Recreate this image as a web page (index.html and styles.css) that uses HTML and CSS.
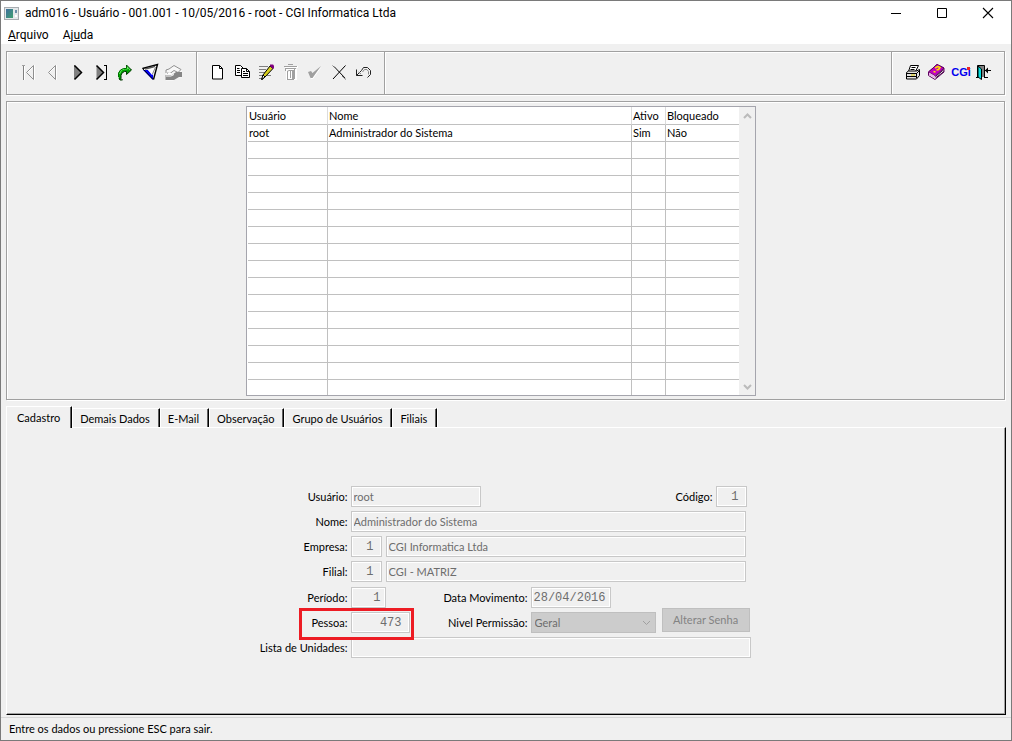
FILE: index.html
```html
<!DOCTYPE html>
<html lang="pt-BR">
<head>
<meta charset="utf-8">
<title>adm016 - Usuário</title>
<link rel="stylesheet" href="styles.css">
</head>
<body>
<div class="window">
  <header class="titlebar">
    <svg class="app-icon" viewBox="0 0 15 13" width="15" height="13" aria-hidden="true">
      <defs><linearGradient id="app" x1="0" y1="0" x2="1" y2="1"><stop offset="0" stop-color="#3f6f9f"/><stop offset="1" stop-color="#3fa070"/></linearGradient></defs>
      <rect x=".5" y=".5" width="14" height="12" fill="#e4e8ea" stroke="#a8acb0"/>
      <rect x="2" y="2" width="7" height="9" fill="url(#app)"/>
      <path d="M11 3h2v3h-2z" fill="#6a8fa8"/><path d="M11 8h2v2h-2z" fill="#fff"/>
    </svg>
    <h1 class="title">adm016 - Usuário - 001.001 - 10/05/2016 - root - CGI Informatica Ltda</h1>
    <div class="window-controls">
      <button type="button" aria-label="Minimizar"><svg viewBox="0 0 12 12" width="12" height="12"><path d="M1 6.500h10" stroke="#000"/></svg></button>
      <button type="button" aria-label="Maximizar"><svg viewBox="0 0 12 12" width="12" height="12"><path d="M1.500 1.500h9v9h-9z" fill="none" stroke="#000"/></svg></button>
      <button type="button" aria-label="Fechar"><svg viewBox="0 0 12 12" width="12" height="12"><path d="M1 1l10 10M11 1L1 11" stroke="#000" stroke-width="1.1"/></svg></button>
    </div>
  </header>
  <nav class="menubar">
    <button type="button"><u>A</u>rquivo</button>
    <button type="button">Aj<u>u</u>da</button>
  </nav>

  <div class="toolbar" role="toolbar">
    <div class="tool-group">
      <button type="button" disabled aria-label="Primeiro"><svg viewBox="0 0 24 24"><g fill="none"><path d="M8.500 5v15M18.500 5v15" stroke="#fff"/><path d="M7.500 5v15" stroke="#808080"/><path d="M6 5.500h3" stroke="#a0a0a0"/><path d="M17.500 5.500l-7 7 7 7z" stroke="#909090"/><path d="M16.500 7.500l-5 5" stroke="#fff"/></g></svg></button>
      <button type="button" disabled aria-label="Anterior"><svg viewBox="0 0 24 24"><g fill="none"><path d="M16.500 5v15" stroke="#fff"/><path d="M15.500 5.500l-7 7 7 7z" stroke="#909090"/><path d="M14.500 7.500l-5 5" stroke="#fff"/></g></svg></button>
      <button type="button" aria-label="Próximo"><svg viewBox="0 0 24 24"><path d="M10.500 6v13l6.500-6.500z" fill="#808080"/><path d="M10.500 5v14" stroke="#808080"/><path d="M10.500 5.500l7 7-7 7" fill="none" stroke="#000" stroke-width="1.500"/></svg></button>
      <button type="button" aria-label="Último"><svg viewBox="0 0 24 24"><path d="M8.500 6v13l6.500-6.500z" fill="#808080"/><path d="M8.500 5.500l7 7-7 7" fill="none" stroke="#000" stroke-width="1.500"/><path d="M16 5.500h2M16 19.500h3" stroke="#000" fill="none"/><path d="M18.500 5v15" stroke="#000"/></svg></button>
      <button type="button" aria-label="Ir para"><svg viewBox="0 0 24 24"><path d="M9 20H7.500L6.500 17v-4l2-3 3-1.500h3V5.500l5 4.500-5 4.500V11.500h-2l-2.500 1.500-1 2.500z" fill="#00a000"/><path d="M7.500 14l2-4 3-1h3V7l2.500 3" stroke="#60f060" fill="none"/><path d="M6.500 17v-4l2-3 3-1.500h3V5" fill="none" stroke="#007000"/><path d="M14.500 5l5 5-5 4.500v-3h-2l-2.500 1.500-1 2.500v3l1.500 1.500h-2.500l-1-2" fill="none" stroke="#003800"/></svg></button>
      <button type="button" aria-label="Filtro"><svg viewBox="0 0 24 24"><path d="M6.500 9l15-4.500-4 15.500z" fill="#f4f4f4"/><path d="M7 10h5l5 5v5z" fill="#0000f0"/><path d="M6.500 8.500l15-4-4 15" fill="none" stroke="#000" stroke-width="1.400"/><path d="M6.500 8.500l10.500 11" stroke="#000"/><path d="M9 9l10-2.500" stroke="#555" stroke-width="1.500"/><path d="M12 10l4 5 3.500-8z" fill="#fff"/><path d="M19.500 7l-3 7" stroke="#888"/></svg></button>
      <button type="button" disabled aria-label="Consultar"><svg viewBox="0 0 24 24"><path d="M6 11l8-6 8 4.500v8l-6 1-3 2.500H6z" fill="#f7f7f7"/><path d="M6 13V10l3-1 5-3.500 7 4-3 3-4-2-4 3-3-.5" fill="none" stroke="#909090"/><path d="M5.500 15h6.500l4-3h6v5h-3l-5 3h-8.500z" fill="#858585"/><path d="M8 13.500h3M6 16h5l3-1.500" fill="none" stroke="#fff"/></svg></button>
    </div>
    <div class="tool-group">
      <button type="button" aria-label="Novo"><svg viewBox="0 0 24 24"><path d="M7.500 5.500h7l3 3v10.500h-10z" fill="#fff" stroke="#000"/><path d="M14.500 5.500v3h3" fill="none" stroke="#000"/></svg></button>
      <button type="button" aria-label="Copiar"><svg viewBox="0 0 24 24"><g fill="#fff" stroke="#000"><path d="M6.500 5.500h5l3 3v7h-8z"/><path d="M12.500 8.500h5l3 3v6h-8z"/><path d="M17.500 8.500v3h3M8 8.500h2.500M8 10.500h3M8 12.500h3M14 11.500h2M14 13.500h5M14 15.500h5" fill="none"/></g></svg></button>
      <button type="button" aria-label="Alterar"><svg viewBox="0 0 24 24"><path d="M6 6.500h9M6 9.500h7M6 12.500h6M6 15.500h4M14 15.500h4M6 18.500h3" stroke="#808080"/><path d="M17 6l3 2.500-8 8.500-3 2.500L10 15z" fill="#d8d020" stroke="#000"/><path d="M10 15l2 2-3.500 2.500z" fill="#fff" stroke="#000"/><path d="M17 4.500h3l1 1V8l-1 1-3-3z" fill="#800080"/></svg></button>
      <button type="button" disabled aria-label="Excluir"><svg viewBox="0 0 24 24"><path d="M9 9h11v11H9zM8 6h13v2H8z" fill="#fff"/><path d="M11 4.500h5M7 6.500h13M8 8.500h11" stroke="#a0a0a0"/><path d="M8.500 8v3M10.500 11v8M10 19.500h7M17.500 8v11M13.500 10v8M11.500 10l-1 2M12 10.500h3" stroke="#a0a0a0"/><path d="M15 10h3v9h-3z" fill="#a0a0a0"/></svg></button>
      <button type="button" disabled aria-label="Confirmar"><svg viewBox="0 0 24 24"><path d="M8 13l3-1 1.500 2 8-7-8.500 12h-2z" fill="#fff"/><path d="M7 12l3-1 1.500 2L20 6l-8.500 12h-2z" fill="#a0a0a0"/></svg></button>
      <button type="button" aria-label="Cancelar"><svg viewBox="0 0 24 24"><path d="M9 6.500l11 11.500M20.500 5.500L8 19" stroke="#000"/><path d="M7.500 5.500l4 4M17 16l4 3.500" stroke="#777"/></svg></button>
      <button type="button" aria-label="Desfazer"><svg viewBox="0 0 24 24"><path d="M7.500 9.500v6h6M7.500 15.500l5-5 2-3h4l3 3v4l-3 3" fill="none" stroke="#222"/><path d="M9.500 12l2.500 2M13.500 12l2-2.500h2.500l1.500 2v3" fill="none" stroke="#888"/></svg></button>
    </div>
    <div class="tool-spacer"></div>
    <div class="tool-group">
      <button type="button" aria-label="Imprimir"><svg viewBox="0 0 24 24"><path d="M9.500 5.500h8l-3 6h-7z" fill="#fff" stroke="#000"/><path d="M10.500 7.500h4M9.500 9.500h4" stroke="#000"/><path d="M5.500 12.500l2-1.500h8l3-1.500v6l-3 3.500h-10z" fill="#e4e4e4" stroke="#000"/><path d="M6 13.500h9.500l3-3M15.500 13v5M6 16.500h9" fill="none" stroke="#000"/><path d="M10 15h4" stroke="#e0d000"/></svg></button>
      <button type="button" aria-label="Ajuda"><svg viewBox="0 0 24 24"><path d="M3.500 12l8.500-7.500 7 3.500v4L10 19.500l-6.500-4z" fill="#fff" stroke="#600060"/><path d="M3.500 12L12 4.500l7 3.500-8.500 8z" fill="#c000c0" stroke="#600060"/><path d="M4 12.500v2.500l6 3.500v-2.500z" fill="#e8b0e8"/><path d="M10.500 18l8.500-6.500M10.500 16.500L19 9.500" stroke="#400040"/><path d="M10 8l3-1.500 2 1-1.500 2-2 .5M8.500 11.500l2 .5" fill="none" stroke="#ffe000" stroke-width="1.600"/></svg></button>
      <button type="button" class="cgi">CGi</button>
      <button type="button" aria-label="Sair"><svg viewBox="0 0 24 24"><path d="M3 17.500h3M11 17.500h4" stroke="#000"/><path d="M4.500 17V5.500h7V17" fill="#808080" stroke="#000"/><path d="M5 6l3.500 3v10.500L5 17z" fill="#00e0e0" stroke="#000"/><path d="M12 10.500h6" stroke="#000"/><path d="M12 10.500l3-3v6z" fill="#000"/></svg></button>
    </div>
  </div>

  <main class="main">
    <section class="grid-panel">
      <div class="grid-box">
        <table class="users">
          <colgroup><col class="c-user"><col><col class="c-active"><col class="c-blocked"></colgroup>
          <thead><tr><th>Usuário</th><th>Nome</th><th>Ativo</th><th>Bloqueado</th></tr></thead>
          <tbody>
            <tr><td>root</td><td>Administrador do Sistema</td><td>Sim</td><td>Não</td></tr>
            <tr><td></td><td></td><td></td><td></td></tr>
            <tr><td></td><td></td><td></td><td></td></tr>
            <tr><td></td><td></td><td></td><td></td></tr>
            <tr><td></td><td></td><td></td><td></td></tr>
            <tr><td></td><td></td><td></td><td></td></tr>
            <tr><td></td><td></td><td></td><td></td></tr>
            <tr><td></td><td></td><td></td><td></td></tr>
            <tr><td></td><td></td><td></td><td></td></tr>
            <tr><td></td><td></td><td></td><td></td></tr>
            <tr><td></td><td></td><td></td><td></td></tr>
            <tr><td></td><td></td><td></td><td></td></tr>
            <tr><td></td><td></td><td></td><td></td></tr>
            <tr><td></td><td></td><td></td><td></td></tr>
            <tr><td></td><td></td><td></td><td></td></tr>
            <tr><td></td><td></td><td></td><td></td></tr>
          </tbody>
        </table>
        <div class="scrollbar">
          <button type="button" aria-label="Rolar para cima"><svg viewBox="0 0 9 6" width="9" height="6"><path d="M1 5l3.500-3.500L8 5" fill="none" stroke="#bbb" stroke-width="2"/></svg></button>
          <button type="button" aria-label="Rolar para baixo"><svg viewBox="0 0 9 6" width="9" height="6"><path d="M1 1l3.500 3.500L8 1" fill="none" stroke="#bbb" stroke-width="2"/></svg></button>
        </div>
      </div>
    </section>

    <div class="tabs" role="tablist">
      <button type="button" role="tab" aria-selected="true" class="tab active">Cadastro</button>
      <button type="button" role="tab" class="tab">Demais Dados</button>
      <button type="button" role="tab" class="tab">E-Mail</button>
      <button type="button" role="tab" class="tab">Observação</button>
      <button type="button" role="tab" class="tab">Grupo de Usuários</button>
      <button type="button" role="tab" class="tab">Filiais</button>
    </div>
    <section class="tab-panel" role="tabpanel">
      <form class="form">
        <div class="row">
          <label for="usuario">Usuário:</label>
          <input id="usuario" class="w-user" value="root" disabled>
          <label for="codigo" class="push">Código:</label>
          <input id="codigo" class="num w-code" value="1" disabled>
          <span class="edge"></span>
        </div>
        <div class="row">
          <label for="nome">Nome:</label>
          <input id="nome" class="w-name" value="Administrador do Sistema" disabled>
        </div>
        <div class="row">
          <label for="empresa">Empresa:</label>
          <input id="empresa" class="num w-code" value="1" disabled>
          <input class="w-desc" aria-label="Nome da empresa" value="CGI Informatica Ltda" disabled>
        </div>
        <div class="row">
          <label for="filial">Filial:</label>
          <input id="filial" class="num w-code" value="1" disabled>
          <input class="w-desc" aria-label="Nome da filial" value="CGI - MATRIZ" disabled>
        </div>
        <div class="row">
          <label for="periodo">Período:</label>
          <div class="cell"><input id="periodo" class="num w-period" value="1" disabled></div>
          <label for="data" class="second">Data Movimento:</label>
          <input id="data" class="num w-date" value="28/04/2016" disabled>
        </div>
        <div class="row highlighted">
          <label for="pessoa">Pessoa:</label>
          <div class="cell"><input id="pessoa" class="num w-person" value="473" disabled></div>
          <label for="nivel" class="second">Nivel Permissão:</label>
          <div class="select-wrap">
            <select id="nivel" disabled><option>Geral</option></select>
            <svg viewBox="0 0 9 6" width="9" height="6" aria-hidden="true"><path d="M1 1l3.500 3.500L8 1" fill="none" stroke="#a0a0a0"/></svg>
          </div>
          <button type="button" class="password" disabled>Alterar Senha</button>
        </div>
        <div class="row">
          <label for="lista">Lista de Unidades:</label>
          <input id="lista" class="w-list" value="" disabled>
        </div>
      </form>
    </section>
  </main>
  <footer class="status">Entre os dados ou pressione ESC para sair.</footer>
</div>
</body>
</html>
```
FILE: styles.css
```css
*, *::before, *::after { box-sizing: border-box; }
body { margin: 0; color: #000; background: #f0f0f0; font: 11px/16px Lato, "Liberation Sans", sans-serif; }
button, input, select { font: inherit; color: inherit; margin: 0; border-radius: 0; }
button { background: none; border: 0; padding: 0; }
svg { display: block; }

.window { min-height: 100vh; display: flex; flex-direction: column; border: 1px solid #7a7a7a; }

.titlebar { display: flex; align-items: center; height: 24px; padding-left: 3px; background: #fff; }
.title { flex: 1; margin: 0 0 0 6px; font: 12px/16px Roboto, "Noto Sans", sans-serif; white-space: nowrap; }
.window-controls { display: flex; }
.window-controls button { display: grid; place-items: center; width: 46px; height: 24px; }
.menubar { display: flex; gap: 14px; height: 19px; padding-left: 7px; background: #fff; font: 12px/20px Roboto, "Noto Sans", sans-serif; }

.toolbar { display: flex; margin: 7px 6px 6px 5px; border: 1px solid #a0a0a0; border-left: 0; box-shadow: inset 0 1px #fff, 1px 1px #fff; }
.tool-group { display: flex; padding: 8px 12px 10px 9px; border-left: 1px solid #a0a0a0; box-shadow: inset 1px 0 #fff; }
.tool-group + .tool-group { padding-left: 8px; padding-right: 11px; }
.tool-spacer { flex: 1; border-left: 1px solid #a0a0a0; box-shadow: inset 1px 0 #fff; }
.tool-spacer + .tool-group { padding-right: 7px; }
.tool-group button, .tool-group svg { width: 24px; height: 24px; }
.cgi { position: relative; color: #00e; font: bold 11px/24px "Liberation Sans", sans-serif; }
.cgi::after { content: ""; position: absolute; top: 7px; right: 3px; width: 3px; height: 3px; background: #e22; }

.main { flex: 1; display: flex; flex-direction: column; padding: 0 5px 0 5px; }
.grid-panel { display: flex; justify-content: center; padding: 4px 9px 3px 0; margin-right: 1px; border: 1px solid #a0a0a0; box-shadow: inset 1px 1px #fff, 1px 1px #fff; }
.grid-box { display: flex; width: 510px; background: #fff; border: 1px solid #a5a5ad; }
.users { flex: 1; margin-left: 1px; border-spacing: 0; table-layout: fixed; }
.c-user { width: 80px; }
.c-active { width: 34px; }
.c-blocked { width: 73px; }
.users th, .users td { height: 17px; padding: 0 1px; font-weight: 400; line-height: 16px; text-align: left; white-space: nowrap; border-right: 1px solid #c0c0c0; border-bottom: 1px solid #c0c0c0; }
.users th { height: 18px; border-right-color: #dcdcdc; }
.users th:last-child, .users td:last-child { border-right: 0; }
.users tbody tr:last-child td { height: 15px; border-bottom: 0; }
.scrollbar { display: flex; flex-direction: column; justify-content: space-between; width: 16px; background: #f0f0f0; }
.scrollbar button { display: grid; place-items: center; height: 17px; }

.tabs { display: flex; align-items: flex-end; margin-top: 6px; }
.tab { height: 19px; padding: 2px 9px 0 8px; border-top: 1px solid #fff; border-right: 1px solid #000; line-height: 16px; box-shadow: inset -1px 0 #606060, 1px 0 #fff; white-space: nowrap; }
.tab.active { position: relative; height: 22px; margin-bottom: -1px; padding: 0 11px 0 10px; border-left: 1px solid #fff; background: #f0f0f0; }
.tab-panel { flex: 1; display: flex; justify-content: center; align-items: flex-start; padding: 58px 2px 8px 0; border: 1px solid #000; border-top-color: #fff; border-left-color: #fff; box-shadow: inset -1px -1px #a0a0a0; }

.form { display: flex; flex-direction: column; gap: 4px; width: 491px; }
.row { position: relative; display: flex; align-items: center; gap: 3px; height: 21px; }
.row:nth-child(5) { margin-top: 1px; }
.row > label { flex: none; width: 88px; text-align: right; white-space: nowrap; line-height: 21px; }
.row > label.push { width: auto; margin-left: auto; }
.edge { width: 1px; }
.cell { width: 80px; }
.row > label.second { width: 94px; }
input { height: 21px; padding: 0 2px; color: #6d6d6d; background: #f0f0f0; border: 1px solid #c8c8c8; box-shadow: inset 0 0 0 1px #fff; }
.num { padding-right: 7px; font: 12px/19px "Liberation Mono", monospace; text-align: right; }
.w-user { width: 130px; }
.w-code { width: 31px; }
.w-code + .w-desc { margin-left: 1px; }
.w-name { width: 395px; }
.w-desc { width: 360px; }
.w-period { width: 35px; padding-right: 4px; }
.w-date { width: 80px; padding: 0 4px 0 2px; }
.w-person { display: block; width: 59px; }
.w-list { width: 400px; }
.select-wrap { position: relative; width: 125px; }
.select-wrap select { display: block; width: 100%; height: 21px; padding: 0 3px; appearance: none; color: #6d6d6d; background: #ccc; border: 1px solid #bfbfbf; opacity: 1; }
.select-wrap svg { position: absolute; right: 5px; top: 8px; }
.password { align-self: flex-end; flex: none; width: 88px; height: 24px; margin: 0 0 1px 3px; color: #838383; background: #ccc; border: 1px solid #bfbfbf; }
.highlighted::after { content: ""; position: absolute; z-index: 1; left: 39px; top: -4px; width: 115px; height: 32px; border: 3px solid #ed1c24; pointer-events: none; }

.status { margin-top: 2px; padding: 3px 8px 3px; border-top: 1px solid #d7d7d7; }
```
